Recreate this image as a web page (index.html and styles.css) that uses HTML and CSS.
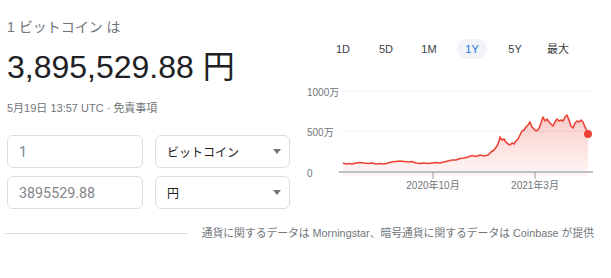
FILE: index.html
```html
<!DOCTYPE html>
<html lang="ja">
<head>
  <meta charset="UTF-8">
  <title>ビットコイン 円 換算</title>
  <link rel="stylesheet" href="styles.css">
</head>
<body>

  <div class="wrap">
    <div class="top">
      <div class="left">
        <div class="from-label">1 ビットコイン は</div>
        <div class="result">3,895,529.88 円</div>
        <div class="stamp">5月19日 13:57 UTC · <span class="disclaimer">免責事項</span></div>

        <div class="row">
          <input class="amount" type="text" value="1">
          <div class="unit">ビットコイン<span class="caret"></span></div>
        </div>
        <div class="row">
          <input class="amount" type="text" value="3895529.88">
          <div class="unit">円<span class="caret"></span></div>
        </div>
      </div>

      <div class="chart">
        <div class="ranges">
          <span class="range">1D</span>
          <span class="range">5D</span>
          <span class="range">1M</span>
          <span class="range active">1Y</span>
          <span class="range">5Y</span>
          <span class="range">最大</span>
        </div>

        <svg class="plot" width="300" height="115" viewBox="300 80 300 115">
          <defs>
            <linearGradient id="area" x1="0" y1="0" x2="0" y2="1">
              <stop offset="0" stop-color="#ea4335" stop-opacity="0.28"/>
              <stop offset="1" stop-color="#ea4335" stop-opacity="0.04"/>
            </linearGradient>
          </defs>

          <line x1="339" y1="91" x2="593" y2="91" stroke="#f1f3f4" stroke-width="1"/>
          <line x1="339" y1="131" x2="593" y2="131" stroke="#f1f3f4" stroke-width="1"/>

          <path fill="url(#area)" d="M343,163 L346,164 L349,163.5 L352,164 L356,163 L360,162.5 L364,163 L368,163.5 L372,163 L376,164 L380,163.5 L384,164 L388,163 L392,162 L396,161.5 L400,161 L404,161.5 L408,162 L412,161.5 L416,163 L420,163.5 L424,163 L428,163.5 L432,163 L436,162.5 L440,163 L444,162 L448,161 L452,160 L456,160 L460,158.5 L464,158 L468,157 L472,155.5 L476,156.5 L480,155 L484,156 L488,155 L491,152 L494,150 L497,146 L499,141 L500,137 L502,140 L504,139 L506,142 L508,144 L510,145 L512,143 L514,144 L516,141 L518,139 L520,135 L522,131 L524,130 L526,127 L528,125 L530,122 L532,127 L534,129 L536,131 L538,130 L540,126 L542,120 L543,117 L545,121 L547,119 L549,122 L551,124 L553,126 L555,122 L557,119 L559,121 L561,120 L563,121 L565,117 L567,115 L569,120 L571,126 L573,128 L575,123 L577,121 L579,122 L581,120 L583,122 L585,127 L587,131 L588,134 L588,176 L343,176 Z"/>

          <line x1="339" y1="172" x2="593" y2="172" stroke="#bdc1c6" stroke-width="2"/>
          <line x1="433" y1="172" x2="433" y2="179" stroke="#9aa0a6" stroke-width="1"/>
          <line x1="535" y1="172" x2="535" y2="179" stroke="#9aa0a6" stroke-width="1"/>

          <path fill="none" stroke="#ea4335" stroke-width="1.6" stroke-linejoin="round" d="M343,163 L346,164 L349,163.5 L352,164 L356,163 L360,162.5 L364,163 L368,163.5 L372,163 L376,164 L380,163.5 L384,164 L388,163 L392,162 L396,161.5 L400,161 L404,161.5 L408,162 L412,161.5 L416,163 L420,163.5 L424,163 L428,163.5 L432,163 L436,162.5 L440,163 L444,162 L448,161 L452,160 L456,160 L460,158.5 L464,158 L468,157 L472,155.5 L476,156.5 L480,155 L484,156 L488,155 L491,152 L494,150 L497,146 L499,141 L500,137 L502,140 L504,139 L506,142 L508,144 L510,145 L512,143 L514,144 L516,141 L518,139 L520,135 L522,131 L524,130 L526,127 L528,125 L530,122 L532,127 L534,129 L536,131 L538,130 L540,126 L542,120 L543,117 L545,121 L547,119 L549,122 L551,124 L553,126 L555,122 L557,119 L559,121 L561,120 L563,121 L565,117 L567,115 L569,120 L571,126 L573,128 L575,123 L577,121 L579,122 L581,120 L583,122 L585,127 L587,131 L588,134"/>
          <circle cx="588" cy="134" r="4" fill="#ea4335"/>

          <text class="axis" x="307" y="95.5">1000万</text>
          <text class="axis" x="307" y="135.5">500万</text>
          <text class="axis" x="307" y="176.5">0</text>
          <text class="axis" x="433" y="188.5" text-anchor="middle">2020年10月</text>
          <text class="axis" x="535" y="188.5" text-anchor="middle">2021年3月</text>
        </svg>
      </div>
    </div>

    <div class="source">
      <div class="rule"></div>
      <div class="source-text">通貨に関するデータは Morningstar、暗号通貨に関するデータは Coinbase が提供</div>
    </div>
  </div>

</body>
</html>
```

FILE: styles.css
```css
body {
  margin: 0;
  font-family: "Liberation Sans", Arial, "Noto Sans CJK JP", sans-serif;
  color: #202124;
  background: #fff;
}

.wrap {
  padding: 0 17px 0 7px;
}

.top {
  display: flex;
  gap: 10px;
}

.left {
  width: 283px;
}

.from-label {
  margin-top: 17px;
  font-size: 14px;
  line-height: 20px;
  color: #70757a;
}

.result {
  margin-top: 10px;
  font-size: 32px;
  line-height: 40px;
  color: #202124;
}

.stamp {
  margin-top: 13px;
  font-size: 11px;
  line-height: 16px;
  color: #70757a;
}

.row {
  display: flex;
  gap: 12px;
  margin-top: 8px;
}

.stamp + .row {
  margin-top: 19px;
}

.amount,
.unit {
  box-sizing: border-box;
  height: 33px;
  width: 136px;
  border: 1px solid #dadce0;
  border-radius: 6px;
  background: #fff;
}

.amount {
  margin: 0;
  padding: 0 11px;
  font-family: Roboto, "Liberation Sans", sans-serif;
  font-size: 14.3px;
  color: #80868b;
  outline: none;
}

.unit {
  display: flex;
  align-items: center;
  justify-content: space-between;
  padding: 0 8px 0 11px;
  font-size: 12px;
  color: #202124;
}

.caret {
  width: 0;
  height: 0;
  border-left: 4px solid transparent;
  border-right: 4px solid transparent;
  border-top: 5px solid #757575;
}

.chart {
  width: 300px;
}

.ranges {
  display: flex;
  gap: 13px;
  margin: 39px 0 0 28px;
}

.range {
  width: 30px;
  height: 20px;
  line-height: 20px;
  border-radius: 10px;
  text-align: center;
  font-size: 11px;
  color: #3c4043;
}

.range.active {
  background: #f1f3f6;
  color: #1a73e8;
}

.plot {
  display: block;
  margin-top: 21px;
}

.axis {
  font-size: 10px;
  fill: #70757a;
  font-family: "Liberation Sans", Arial, "Noto Sans CJK JP", sans-serif;
}

.source {
  display: flex;
  align-items: center;
  gap: 14px;
  margin: 16px 0 0 -2px;
}

.rule {
  flex: 1;
  height: 1px;
  background: #dadce0;
}

.source-text {
  font-size: 10.8px;
  line-height: 16px;
  color: #70757a;
  white-space: nowrap;
}
```
